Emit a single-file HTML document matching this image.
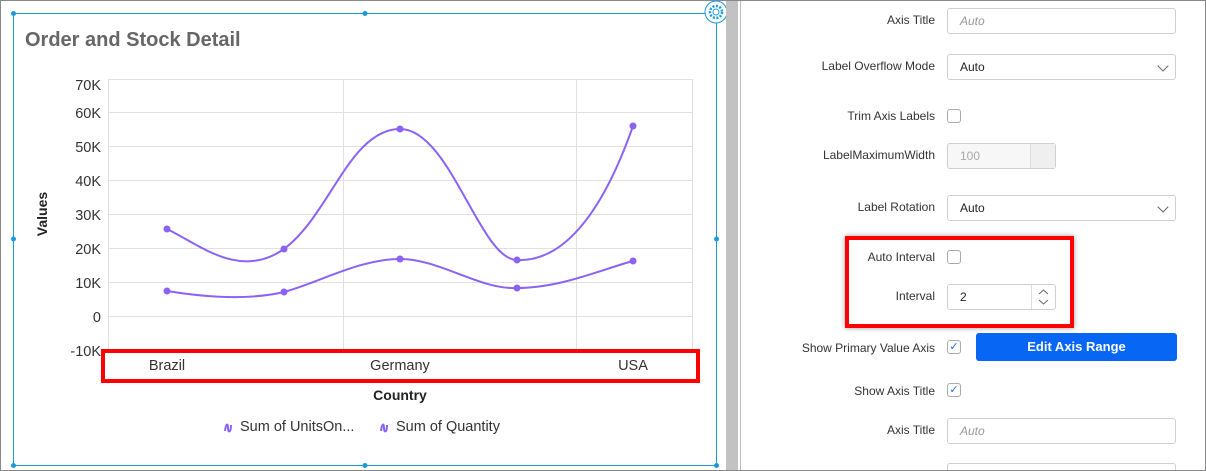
<!DOCTYPE html>
<html style="overflow:hidden;width:1206px;height:471px"><head><style>
body{margin:0;width:1206px;height:471px;overflow:hidden;font-family:"Liberation Sans",sans-serif;background:#fff;position:relative}
.abs{position:absolute}
.lbl{position:absolute;right:271px;font-size:12px;color:#333;text-align:right;white-space:nowrap}
.inp{position:absolute;left:947px;width:229px;height:26px;border:1px solid #cfcfcf;border-radius:3px;box-sizing:border-box;font-size:12px;padding:0 12px;line-height:25px;color:#222;background:#fff}
.cb{position:absolute;left:947px;width:14px;height:14px;border:1px solid #aaa;border-radius:3px;box-sizing:border-box;background:#fff}
.chev{position:absolute;right:8px;top:7px;width:7px;height:7px;border-right:1px solid #666;border-bottom:1px solid #666;transform:rotate(45deg)}
</style></head><body>
<div class="abs" style="left:947px;top:463px;width:229px;height:8px;border:1px solid #cfcfcf;border-bottom:none;border-radius:3px 3px 0 0;box-sizing:border-box"></div>
<div class="abs" style="left:0;top:0;width:1204px;height:469px;border:1px solid #888"></div>
<div class="abs" style="left:726px;top:1px;width:12px;height:469px;background:#c2c2c2"></div>
<div class="abs" style="left:740px;top:1px;width:1px;height:469px;background:#bbb"></div>
<svg class="abs" style="left:0;top:0" width="726" height="471">
<rect x="13.5" y="13.5" width="703" height="452" fill="none" stroke="#1a9ad6" stroke-width="1"/>
<g fill="#1a9ad6">
<circle cx="13.5" cy="13.5" r="2.5"/><circle cx="365" cy="13.5" r="2.5"/><circle cx="13.5" cy="239" r="2.5"/><circle cx="716.5" cy="239" r="2.5"/><circle cx="13.5" cy="465.5" r="2.5"/><circle cx="365" cy="465.5" r="2.5"/><circle cx="716.5" cy="465.5" r="2.5"/></g>
<circle cx="716" cy="12" r="11" fill="#fff" stroke="#1a9ad6"/>
<circle cx="716" cy="12" r="6" fill="none" stroke="#1a9ad6" stroke-width="2.5" stroke-dasharray="2 1.5"/>
<circle cx="716" cy="12" r="3" fill="none" stroke="#1a9ad6"/>
<text x="25" y="46" font-size="20" font-weight="bold" fill="#666">Order and Stock Detail</text>
<g stroke="#e0e0e0" stroke-width="1">
<line x1="108" y1="79.5" x2="692" y2="79.5"/><line x1="108" y1="112.5" x2="692" y2="112.5"/><line x1="108" y1="146.5" x2="692" y2="146.5"/><line x1="108" y1="180.5" x2="692" y2="180.5"/><line x1="108" y1="214.5" x2="692" y2="214.5"/><line x1="108" y1="248.5" x2="692" y2="248.5"/><line x1="108" y1="282.5" x2="692" y2="282.5"/><line x1="108" y1="316.5" x2="692" y2="316.5"/>
<line x1="108.5" y1="79" x2="108.5" y2="350"/><line x1="343.5" y1="79" x2="343.5" y2="350"/><line x1="576.5" y1="79" x2="576.5" y2="350"/><line x1="692.5" y1="79" x2="692.5" y2="350"/></g>
<g font-size="14.5" fill="#333" text-anchor="end">
<text x="101" y="90">70K</text><text x="101" y="118">60K</text><text x="101" y="152">50K</text><text x="101" y="186">40K</text><text x="101" y="220">30K</text><text x="101" y="254">20K</text><text x="101" y="288">10K</text><text x="101" y="322">0</text><text x="101" y="356">-10K</text></g>
<text transform="translate(47,214) rotate(-90)" font-size="14" font-weight="bold" text-anchor="middle" fill="#222">Values</text>
<g fill="none" stroke="#8a63f5" stroke-width="2">
<path d="M167,229 C200,245 240,280 284,249 C330,215 350,129 400,129 C450,129 480,260 517,260 C560,262 600,220 633,126"/>
<path d="M167,291 C210,298 250,300 284,292 C320,282 360,259 400,259 C440,259 480,290 517,288 C560,288 600,270 633,261"/></g>
<g fill="#8a63f5"><circle cx="167" cy="229" r="3.5"/><circle cx="284" cy="249" r="3.5"/><circle cx="400" cy="129" r="3.5"/><circle cx="517" cy="260" r="3.5"/><circle cx="633" cy="126" r="3.5"/>
<circle cx="167" cy="291" r="3.5"/><circle cx="284" cy="292" r="3.5"/><circle cx="400" cy="259" r="3.5"/><circle cx="517" cy="288" r="3.5"/><circle cx="633" cy="261" r="3.5"/></g>
<rect x="103" y="351" width="595" height="30" fill="#fff" stroke="#ff0000" stroke-width="4"/>
<g font-size="14.5" fill="#333" text-anchor="middle"><text x="167" y="370">Brazil</text><text x="400" y="370">Germany</text><text x="633" y="370">USA</text></g>
<text x="400" y="400" font-size="14" font-weight="bold" text-anchor="middle" fill="#222">Country</text>
<path d="M225,431 c1,-8 3,-8 3,-3 c0,5 3,5 3,-3" fill="none" stroke="#8a63f5" stroke-width="2"/>
<text x="240" y="431" font-size="14.5" fill="#333">Sum of UnitsOn...</text>
<path d="M381,431 c1,-8 3,-8 3,-3 c0,5 3,5 3,-3" fill="none" stroke="#8a63f5" stroke-width="2"/>
<text x="396" y="431" font-size="14.5" fill="#333">Sum of Quantity</text>
</svg>

<div class="lbl" style="top:13px">Axis Title</div>
<div class="inp" style="top:8px;color:#999;font-style:italic">Auto</div>
<div class="lbl" style="top:59px">Label Overflow Mode</div>
<div class="inp" style="top:54px">Auto<span class="chev"></span></div>
<div class="lbl" style="top:109px">Trim Axis Labels</div>
<div class="cb" style="top:109px"></div>
<div class="lbl" style="top:148px">LabelMaximumWidth</div>
<div class="inp" style="top:143px;width:109px;color:#aaa;background:#f7f7f7">100<span class="abs" style="right:0;top:0;width:24px;height:24px;border-left:1px solid #ddd;background:#efefef"></span></div>
<div class="lbl" style="top:200px">Label Rotation</div>
<div class="inp" style="top:195px">Auto<span class="chev"></span></div>
<div class="abs" style="left:845px;top:236px;width:229px;height:92px;border:4px solid #ff0000;box-sizing:border-box;box-shadow:0 0 5px rgba(0,0,0,.4)"></div>
<div class="lbl" style="top:250px">Auto Interval</div>
<div class="cb" style="top:250px"></div>
<div class="lbl" style="top:289px">Interval</div>
<div class="inp" style="top:284px;width:109px">2<svg class="abs" style="right:0;top:0;border-left:1px solid #ddd" width="23" height="24"><path d="M7,9 l4.5,-4 l4.5,4 M7,15 l4.5,4 l4.5,-4" fill="none" stroke="#666"/></svg></div>
<div class="lbl" style="top:341px">Show Primary Value Axis</div>
<div class="cb" style="top:340px;color:#1a6ef5;font-size:11px;line-height:12px;text-align:center">✓</div>
<div class="abs" style="left:976px;top:333px;width:201px;height:28px;background:#0866f5;border-radius:3px;color:#fff;font-weight:bold;font-size:13px;text-align:center;line-height:28px">Edit Axis Range</div>
<div class="lbl" style="top:384px">Show Axis Title</div>
<div class="cb" style="top:383px;color:#1a6ef5;font-size:11px;line-height:12px;text-align:center">✓</div>
<div class="lbl" style="top:423px">Axis Title</div>
<div class="inp" style="top:418px;color:#999;font-style:italic">Auto</div>
</body></html>
